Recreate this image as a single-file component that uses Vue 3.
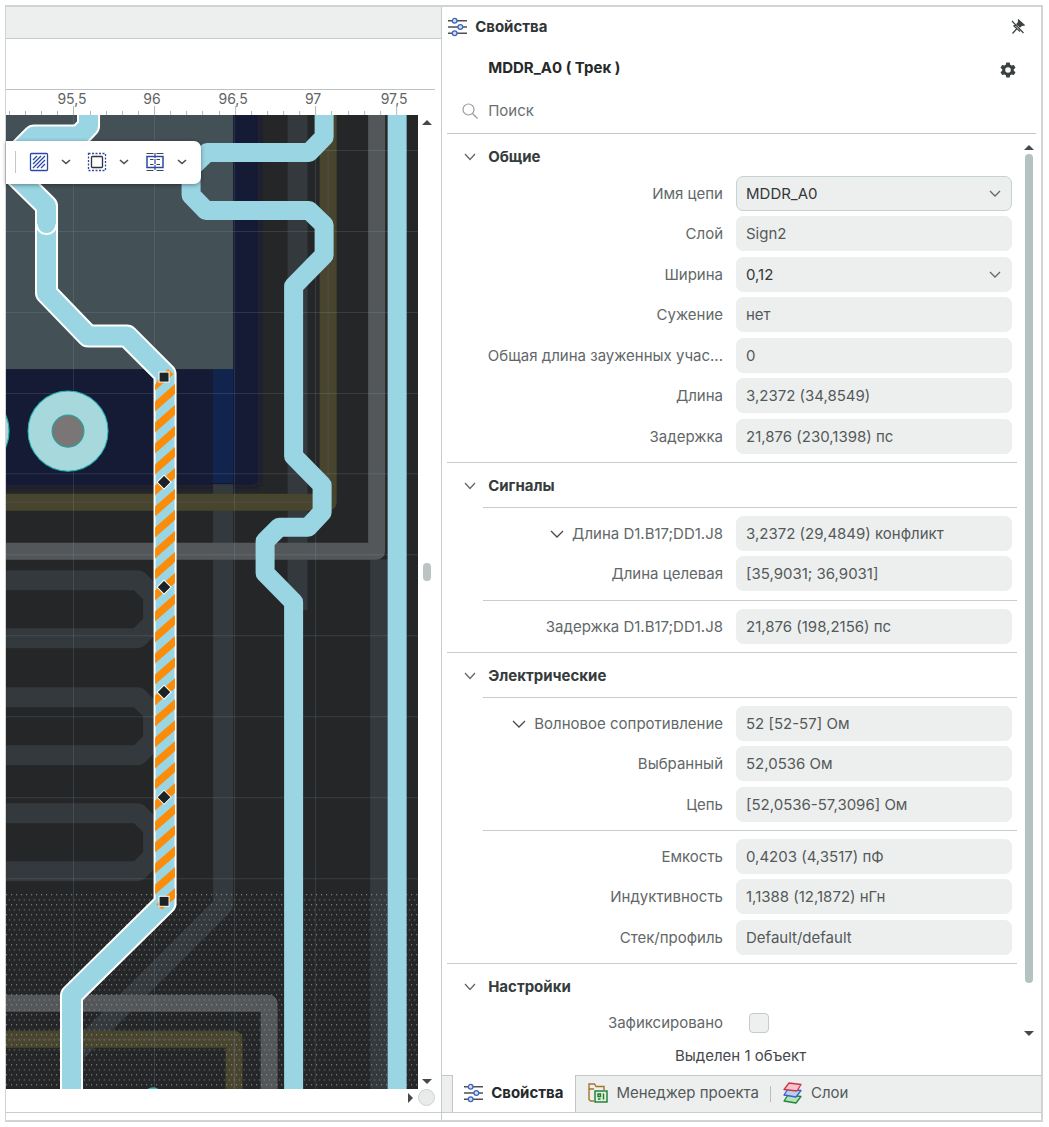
<script setup>
import { ref } from 'vue'

const rulerLabels = [
  { x: 72, text: '95,5' },
  { x: 152, text: '96' },
  { x: 233, text: '96,5' },
  { x: 313, text: '97' },
  { x: 394, text: '97,5' },
]
const ticks = Array.from({ length: 25 }, (_, i) => ({
  x: Math.round(9 + i * 16.12),
  major: i % 5 === 4,
}))
const gridX = [73, 154, 234, 315]
const gridY = [150, 231, 312, 393, 473, 554, 635, 716, 797, 878]
const loops = [609, 726, 842]
const stripes = Array.from({ length: 26 }, (_, i) => 380 + i * 21)
const diamonds = [482, 587, 692, 797]

const sections = ref([
  {
    title: 'Общие',
    groups: [[
      { label: 'Имя цепи', value: 'MDDR_A0', select: true, active: true },
      { label: 'Слой', value: 'Sign2' },
      { label: 'Ширина', value: '0,12', select: true },
      { label: 'Сужение', value: 'нет' },
      { label: 'Общая длина зауженных учас...', value: '0' },
      { label: 'Длина', value: '3,2372 (34,8549)' },
      { label: 'Задержка', value: '21,876 (230,1398) пс' },
    ]],
  },
  {
    title: 'Сигналы',
    ruled: true,
    groups: [
      [
        { label: 'Длина D1.B17;DD1.J8', value: '3,2372 (29,4849) конфликт', expand: true },
        { label: 'Длина целевая', value: '[35,9031; 36,9031]' },
      ],
      [{ label: 'Задержка D1.B17;DD1.J8', value: '21,876 (198,2156) пс' }],
    ],
  },
  {
    title: 'Электрические',
    ruled: true,
    groups: [
      [
        { label: 'Волновое сопротивление', value: '52 [52-57] Ом', expand: true },
        { label: 'Выбранный', value: '52,0536 Ом' },
        { label: 'Цепь', value: '[52,0536-57,3096] Ом' },
      ],
      [
        { label: 'Емкость', value: '0,4203 (4,3517) пФ' },
        { label: 'Индуктивность', value: '1,1388 (12,1872) нГн' },
        { label: 'Стек/профиль', value: 'Default/default' },
      ],
    ],
  },
])
const fieldId = (s, g, r) => `field-${s}-${g}-${r}`
</script>

<template>
  <div class="window">
    <main class="editor">
      <div class="strip"></div>
      <div class="blank"></div>
      <div class="workspace">
        <div class="view">
          <svg class="ruler" viewBox="6 90 412 25" preserveAspectRatio="xMinYMax slice">
            <text v-for="l in rulerLabels" :key="l.text" :x="l.x" y="104" text-anchor="middle">{{ l.text }}</text>
            <path v-for="t in ticks" :key="t.x" :d="`M${t.x + 0.5} ${t.major ? 106 : 111}V115`" />
          </svg>
          <svg class="board" viewBox="6 115 412 974" preserveAspectRatio="xMinYMin slice">
            <defs>
              <pattern id="dots" x="6" y="893" width="5" height="10" patternUnits="userSpaceOnUse">
                <rect x="0" y="1" width="1" height="1" />
                <rect x="3" y="6" width="1" height="1" />
              </pattern>
              <clipPath id="segment"><path d="M155 385L166 367L175 376V903L165 912L155 903Z" /></clipPath>
              <filter id="soft"><feGaussianBlur stdDeviation="3" /></filter>
            </defs>
            <rect x="6" y="115" width="412" height="974" fill="#242628" />
            <rect x="-10" y="100" width="268" height="385" fill="#14183a" filter="url(#soft)" />
            <rect x="6" y="115" width="250" height="368" fill="#151a35" />
            <rect x="213" y="369" width="20" height="114" fill="#11244d" />
            <rect x="6" y="115" width="227" height="254" fill="#435055" />
            <g class="dim">
              <path d="M297.500 115V610" />
              <path d="M223 484V905L70 1058" />
              <path d="M380 559V1089" />
              <path v-for="y in loops" :key="y" :d="`M0 ${y - 29}H138L153 ${y - 14}V${y + 14}L138 ${y + 29}H0`" />
            </g>
            <path class="bar olive" d="M328 110V502H0" />
            <path class="thread" d="M328 110V502H0" />
            <path class="bar grey" d="M376.500 110V551H0" />
            <path class="bar grey" d="M0 1003H269V1095" />
            <path class="bar olive" d="M0 1039H234V1095" />
            <path class="thread" d="M0 1039H234V1095" />
            <rect x="6" y="893" width="412" height="196" fill="url(#dots)" />
            <g class="gridlines">
              <path v-for="x in gridX" :key="x" :d="`M${x + 0.5} 115V1089`" />
              <path v-for="y in gridY" :key="y" :d="`M6 ${y + 0.5}H418`" />
            </g>
            <circle class="pad" cx="68" cy="431" r="40" />
            <circle class="pad" cx="-31" cy="431" r="40" />
            <circle cx="68" cy="431" r="16" fill="#7a7676" stroke="#1fa6a4" />
            <circle cx="153" cy="1097" r="10" fill="#2fb5a4" />
            <path class="track" d="M397 110V1095" />
            <path class="track" d="M324 110V137L309 152.500H207L191 168V195L206 210.500H309L324 225V255L293.500 286V456L322 485V512L308 527H279L265 541V573L293.500 602V1095" />
            <g v-for="layer in ['outline', 'core']" :key="layer" :class="layer">
              <path d="M88.500 110V126L79 136H34L10 160V170L46.500 206V223" />
              <path d="M46.500 224V293L88 336H127L165 374V903L71.500 995V1095" />
            </g>
            <path d="M36.500 224A10 10 0 0 0 56.500 224" fill="none" stroke="#fff" stroke-width="2" />
            <g clip-path="url(#segment)">
              <path v-for="y in stripes" :key="y" :d="`M153 ${y + 2}L177 ${y - 19}V${y - 9}L153 ${y + 12}Z`" fill="#fb8c0a" />
            </g>
            <g class="handles">
              <rect x="159" y="372" width="10" height="10" />
              <rect x="159" y="896" width="10" height="10" />
              <path v-for="y in diamonds" :key="y" :d="`M164 ${y - 7}L171 ${y}L164 ${y + 7}L157 ${y}Z`" />
            </g>
          </svg>
          <div class="toolbar">
            <span class="divider"></span>
            <button type="button" aria-label="Заливка">
              <svg width="20" height="20" viewBox="0 0 20 20" fill="none" stroke="#2d49a8" stroke-width="1.300"><rect x="1.500" y="1.500" width="17" height="17" rx="1" /><path d="M4 8L8 4M4 12L12 4M4 16L16 4M8 16L16 8M12 16L16 12" /></svg>
            </button>
            <button type="button" class="drop" aria-label="Варианты заливки"><svg width="10" height="6" viewBox="0 0 10 6"><path d="M1 1L5 4.500L9 1" /></svg></button>
            <button type="button" aria-label="Область">
              <svg width="20" height="20" viewBox="0 0 20 20" fill="none" stroke-width="1.300"><rect x="1.500" y="1.500" width="17" height="17" stroke="#2d49a8" stroke-dasharray="2 1.500" /><rect x="4.500" y="4.500" width="11" height="11" rx="1" stroke="#333" /></svg>
            </button>
            <button type="button" class="drop" aria-label="Варианты области"><svg width="10" height="6" viewBox="0 0 10 6"><path d="M1 1L5 4.500L9 1" /></svg></button>
            <button type="button" aria-label="Разрез">
              <svg width="20" height="20" viewBox="0 0 20 20" fill="none" stroke-width="1.200"><path d="M1.500 1.500H8.500M11.500 1.500H18.500M5 7.500H8.500M11.500 7.500H15M5 12.500H8.500M11.500 12.500H15M1.500 18.500H8.500M11.500 18.500H18.500" stroke="#444" /><rect x="2" y="4.500" width="16" height="11" stroke="#2d49a8" stroke-width="1.500" /><path d="M10 1V19" stroke="#2d49a8" stroke-dasharray="5 1" /></svg>
            </button>
            <button type="button" class="drop" aria-label="Варианты разреза"><svg width="10" height="6" viewBox="0 0 10 6"><path d="M1 1L5 4.500L9 1" /></svg></button>
          </div>
        </div>
        <div class="vscroll">
          <i class="arrow up"></i><i class="grip"></i><i class="arrow down"></i>
        </div>
      </div>
      <div class="hscroll"><i class="arrow right"></i><i class="knob"></i></div>
      <div class="foot"></div>
    </main>

    <aside class="panel">
      <header class="head">
        <svg class="sliders" width="19" height="20" viewBox="0 0 20 20"><path d="M0 3.500H20M0 10H20M0 16.500H20" /><circle cx="7" cy="3.500" r="2.500" /><circle cx="13" cy="10" r="2.500" /><circle cx="7" cy="16.500" r="2.500" /></svg>
        <h1>Свойства</h1>
        <button type="button" aria-label="Открепить">
          <svg width="14" height="16" viewBox="0 0 14 16" fill="none" stroke="#3c4142" stroke-width="1.200"><path d="M1 2L12.500 14M1.500 14.500L5.500 10M2.500 6.500L9 12.500M3 6.500L6.500 6" /><path d="M7.500 1L13 6L10.500 6.500L9 8L6 5L7.500 3.500Z" fill="#3c4142" /></svg>
        </button>
      </header>
      <div class="object">
        <h2>MDDR_A0 ( Трек )</h2>
        <button type="button" aria-label="Настройки">
          <svg width="16" height="16" viewBox="0 0 16 16" fill="#3c4142" fill-rule="evenodd"><path d="M6.300 .5H9.700L10.200 2.800L11.600 3.600L13.900 2.900L15.500 5.800L13.800 7.300V8.700L15.500 10.200L13.900 13.100L11.600 12.400L10.200 13.200L9.700 15.500H6.300L5.800 13.200L4.400 12.400L2.100 13.100L.5 10.200L2.200 8.700V7.300L.5 5.800L2.100 2.900L4.400 3.600L5.800 2.800ZM8 5.200A2.800 2.800 0 1 0 8 10.800A2.800 2.800 0 1 0 8 5.200Z" /></svg>
        </button>
      </div>
      <label class="search">
        <svg width="16" height="16" viewBox="0 0 16 16" fill="none" stroke="#999d9e" stroke-width="1.200"><circle cx="6.500" cy="6.500" r="5.500" /><path d="M10.500 10.500L15.500 15.500" /></svg>
        <input type="text" placeholder="Поиск" aria-label="Поиск">
      </label>

      <div class="body">
        <div class="sections">
          <section v-for="(s, si) in sections" :key="s.title" :class="{ ruled: s.ruled }">
            <h3><button type="button"><svg width="12" height="8" viewBox="0 0 12 8"><path d="M1 1L6 6.500L11 1" /></svg>{{ s.title }}</button></h3>
            <div v-for="(g, gi) in s.groups" :key="gi" class="group">
              <div v-for="(r, ri) in g" :key="r.label" class="row">
                <div class="name">
                  <button v-if="r.expand" type="button" aria-label="Свернуть"><svg width="14" height="8" viewBox="0 0 14 8"><path d="M1 1L7 7L13 1" /></svg></button>
                  <label :for="fieldId(si, gi, ri)">{{ r.label }}</label>
                </div>
                <div v-if="r.select" class="picker" :class="{ active: r.active }">
                  <select :id="fieldId(si, gi, ri)"><option>{{ r.value }}</option></select>
                  <svg width="12" height="8" viewBox="0 0 12 8"><path d="M1 1L6 6L11 1" /></svg>
                </div>
                <input v-else :id="fieldId(si, gi, ri)" class="value" type="text" :value="r.value" readonly>
              </div>
            </div>
          </section>
          <section class="last">
            <h3><button type="button"><svg width="12" height="8" viewBox="0 0 12 8"><path d="M1 1L6 6.500L11 1" /></svg>Настройки</button></h3>
            <div class="row">
              <div class="name"><label for="locked">Зафиксировано</label></div>
              <input id="locked" class="check" type="checkbox">
            </div>
          </section>
        </div>
        <div class="scroll"><i class="arrow up"></i><i class="thumb"></i><i class="arrow down"></i></div>
      </div>

      <p class="status">Выделен 1 объект</p>
      <nav class="tabs">
        <a href="#properties" class="current">
          <svg class="sliders" width="19" height="20" viewBox="0 0 20 20"><path d="M0 3.500H20M0 10H20M0 16.500H20" /><circle cx="7" cy="3.500" r="2.500" /><circle cx="13" cy="10" r="2.500" /><circle cx="7" cy="16.500" r="2.500" /></svg>
          Свойства
        </a>
        <a href="#project">
          <svg width="20" height="20" viewBox="0 0 20 20" fill="none" stroke-width="1.400"><path d="M6 18H2.500L1 16.500V1H6.500L8 3.500H16V7M1 6H6" stroke="#a5742c" /><rect x="7" y="8" width="12" height="11" fill="#dff0df" stroke="#1f7a2c" /><path d="M10 11H12.500V13.500H10ZM10 16H12.500M15.500 10.500V16.500" stroke="#1f7a2c" /></svg>
          Менеджер проекта
        </a>
        <span class="divider"></span>
        <a href="#layers">
          <svg width="20" height="22" viewBox="0 0 20 22" stroke-linejoin="round" stroke-width="1.300"><path d="M5 13L18 14.500L13 21L1 19Z" fill="#b5e3b8" stroke="#21853a" /><path d="M5 7L18 8.500L13 15L1 13Z" fill="#b9cdf6" stroke="#3a62c4" /><path d="M6 1L18 2.500L14 9L1 7.500Z" fill="#f9c3c8" stroke="#c63a48" /></svg>
          Слои
        </a>
      </nav>
      <div class="foot"></div>
    </aside>
  </div>
</template>

<style>
body {
  background: #fff;
}
</style>

<style scoped>
* {
  box-sizing: border-box;
}
.window {
  display: flex;
  margin: 5px 6px 4px 5px;
  border: 2px solid #d2d3d3;
  border-left-width: 1px;
  font: 15px/20px Inter, "Liberation Sans", sans-serif;
  color: #54595a;
}
h1, h2, h3, p {
  margin: 0;
  font-size: 15px;
}
button {
  display: flex;
  align-items: center;
  padding: 0;
  border: 0;
  background: none;
  color: inherit;
  font: inherit;
}
.editor {
  display: flex;
  flex: 436 1 0;
  flex-direction: column;
  min-width: 0;
}
.strip {
  height: 32px;
  border-bottom: 1px solid #c9cccc;
  background: #edefee;
}
.blank {
  height: 50px;
  margin-right: 6px;
}
.workspace {
  display: flex;
  flex: 1;
  margin-right: 6px;
  border-top: 1px solid #bfc2c2;
}
.view {
  position: relative;
  display: flex;
  flex: 1;
  flex-direction: column;
  min-width: 0;
}
.ruler {
  width: 100%;
  height: 25px;
  font-size: 14px;
  fill: #5f6465;
}
.ruler path {
  stroke: #b5b8b8;
}
.board {
  flex: 1 1 0;
  width: 100%;
  min-height: 0;
}
.board pattern rect {
  fill: #9a9d9e;
}
.board path {
  stroke-linejoin: round;
}
.dim path {
  fill: none;
  stroke: #33393c;
  stroke-width: 20;
}
.bar {
  fill: none;
  stroke-width: 17;
}
.olive {
  stroke: #48452f;
}
.thread {
  fill: none;
  stroke: #50483a;
  stroke-width: 2;
}
.grey {
  stroke: #54575a;
}
.gridlines path {
  stroke: #8fb0c4;
  stroke-opacity: 0.180;
}
.pad {
  fill: #a6d8dc;
  stroke: #23b3b4;
}
.track {
  fill: none;
  stroke: #9ad5e3;
  stroke-width: 19;
}
.outline path {
  fill: none;
  stroke: #fff;
  stroke-width: 23;
  stroke-linecap: round;
}
.core path {
  fill: none;
  stroke: #9ad5e3;
  stroke-width: 19;
  stroke-linecap: round;
}
.handles {
  fill: #1d2226;
  stroke: #fff;
}
.toolbar {
  position: absolute;
  top: 51px;
  left: 0;
  display: flex;
  align-items: center;
  height: 43px;
  padding: 0 14px 2px 9px;
  border-radius: 0 7px 7px 0;
  background: #fff;
  box-shadow: 0 1px 4px #0006;
}
.toolbar .divider {
  width: 1px;
  height: 22px;
  margin-right: 13px;
  background: #c5c8c8;
}
.drop {
  margin: 0 16px 0 12px;
}
.drop:last-child {
  margin-right: 0;
}
.drop path {
  fill: none;
  stroke: #4a4f50;
  stroke-width: 1.600;
}
.arrow {
  width: 0;
  height: 0;
  border: 5px solid transparent;
}
.up {
  border-top: 0;
  border-bottom-color: #44494a;
}
.down {
  border-bottom: 0;
  border-top-color: #44494a;
}
.right {
  border-right: 0;
  border-left-color: #44494a;
}
.vscroll {
  display: flex;
  flex: 0 0 17px;
  flex-direction: column;
  align-items: center;
  justify-content: space-between;
  padding: 30px 0 5px;
}
.grip {
  width: 8px;
  height: 18px;
  margin-top: -60px;
  border-radius: 4px;
  background: #bcc3c3;
}
.hscroll {
  display: flex;
  align-items: center;
  justify-content: flex-end;
  gap: 5px;
  height: 23px;
  padding: 0 6px 6px 0;
}
.knob {
  width: 17px;
  height: 17px;
  border: 1px solid #cdd1d1;
  border-radius: 50%;
  background: #e9ebeb;
}
.foot {
  height: 8px;
  border-top: 1px solid #c9cccc;
}
.panel {
  display: flex;
  flex: 600 1 0;
  flex-direction: column;
  min-width: 0;
  border-left: 1px solid #c9cccc;
}
.head {
  display: flex;
  align-items: center;
  gap: 8px;
  height: 39px;
  padding: 0 16px 0 6px;
}
.head h1 {
  flex: 1;
  color: #303536;
}
.sliders path {
  fill: none;
  stroke: #4c5254;
  stroke-width: 1.500;
}
.sliders circle {
  fill: #cfdcfa;
  stroke: #3c63bd;
  stroke-width: 1.300;
}
.object {
  display: flex;
  align-items: center;
  justify-content: space-between;
  height: 43px;
  padding: 0 25px 0 46px;
}
.object h2 {
  color: #25292a;
}
.object button {
  padding-top: 4px;
}
.search {
  display: flex;
  align-items: center;
  gap: 10px;
  height: 45px;
  margin: 0 5px;
  padding: 0 0 1px 15px;
  border-bottom: 1px solid #c3c7c7;
}
.search input {
  flex: 1;
  min-width: 0;
  padding: 0;
  border: 0;
  outline: 0;
  background: none;
  font: inherit;
}
.search input::placeholder {
  color: #6a6f70;
  opacity: 1;
}
.body {
  display: flex;
  gap: 7px;
  padding: 0 7px 0 5px;
}
.sections {
  flex: 1;
  min-width: 0;
}
section {
  border-bottom: 1px solid #c9cccc;
}
h3 {
  display: flex;
  align-items: center;
  height: 44px;
  padding: 2px 0 0 17px;
  color: #363b3c;
}
h3 button {
  gap: 12px;
}
h3 path, .name path, .picker path {
  fill: none;
  stroke: #62686a;
  stroke-width: 1.300;
}
.name path {
  stroke: #44494a;
}
.group {
  display: flex;
  flex-direction: column;
  gap: 5px;
  margin-top: -2px;
  padding-bottom: 8px;
}
.ruled .group {
  margin: 0 0 0 36px;
  padding-top: 8px;
  border-top: 1px solid #c9cccc;
}
.row {
  display: flex;
  align-items: center;
  gap: 13px;
  padding-right: 5px;
}
.row:nth-child(odd) + .row {
  padding-bottom: 1px;
}
.name {
  display: flex;
  flex: 1;
  align-items: center;
  justify-content: flex-end;
  gap: 8px;
  min-width: 0;
  color: #626768;
  white-space: nowrap;
}
.value, .picker {
  flex: 0 0 276px;
  width: 276px;
  height: 35px;
  border: 1px solid #edefee;
  border-radius: 7px;
  background: #edefee;
}
.value {
  padding: 0 9px;
  outline: 0;
  color: #54595a;
  font: inherit;
}
.picker {
  display: flex;
  align-items: center;
  padding-right: 10px;
}
.picker.active {
  border-color: #c5d2d2;
}
.picker select {
  flex: 1;
  height: 33px;
  padding: 0 9px;
  border: 0;
  outline: 0;
  appearance: none;
  background: none;
  color: #33383a;
  font: inherit;
}
.last {
  border: 0;
}
.last .row {
  height: 30px;
  gap: 26px;
}
.check {
  flex: 0 0 20px;
  width: 20px;
  height: 20px;
  margin: 0 243px 0 0;
  border: 1px solid #c3cccc;
  border-radius: 4px;
  appearance: none;
  background: #edf0ef;
}
.scroll {
  display: flex;
  flex: 0 0 10px;
  flex-direction: column;
  align-items: center;
  padding-top: 11px;
}
.thumb {
  flex: 1;
  width: 8px;
  margin: 4px 0 48px;
  border-radius: 4px;
  background: #b4c2c2;
}
.scroll .down {
  margin-bottom: 2px;
}
.status {
  height: 37px;
  padding: 8px 2px 0 0;
  color: #45494a;
  text-align: center;
}
.tabs {
  display: flex;
  align-items: center;
  height: 37px;
  padding-left: 10px;
  border-top: 1px solid #c3c7c7;
  background: #edefee;
}
.tabs a {
  display: flex;
  align-items: center;
  gap: 8px;
  height: 36px;
  padding: 0 11px 2px 12px;
  color: #54595a;
  text-decoration: none;
}
.tabs .current {
  height: 37px;
  margin-top: -1px;
  padding-left: 11px;
  padding-right: 12px;
  border: solid #c3c7c7;
  border-width: 0 1px;
  background: #fff;
  color: #25292a;
  font-weight: 700;
}
.tabs .divider {
  width: 1px;
  height: 16px;
  background: #b9bebe;
}
</style>
